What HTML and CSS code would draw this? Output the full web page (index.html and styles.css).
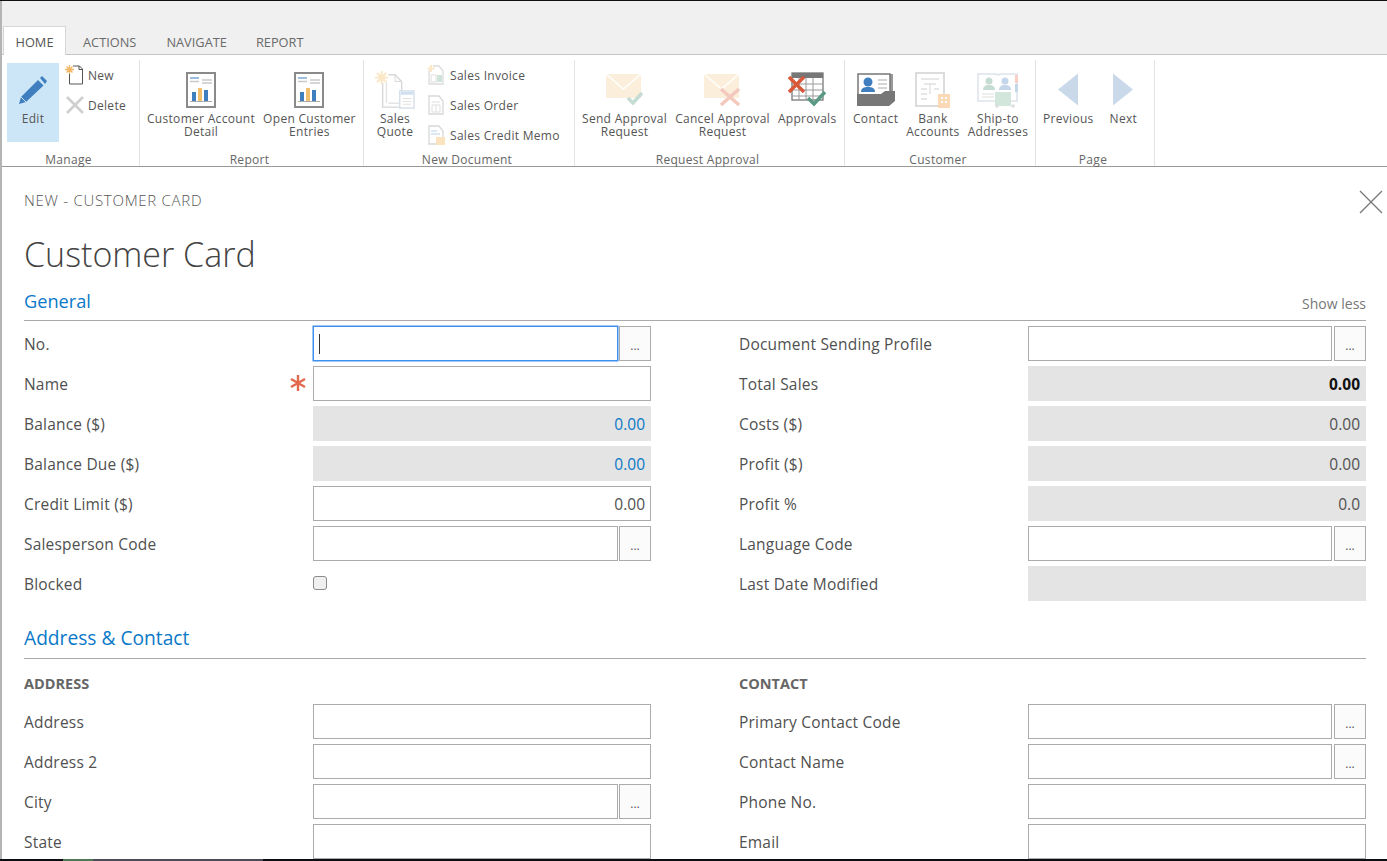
FILE: index.html
```html
<!DOCTYPE html>
<html lang="en">
<head>
<meta charset="utf-8">
<title>Customer Card</title>
<link rel="stylesheet" href="styles.css">
</head>
<body>
<div class="screen">
  <div class="top-line"></div>
  <div class="middle">
    <div class="side-bar"></div>
    <div class="app">
      <header class="chrome">
        <nav class="tabs">
          <span class="tab tab-active">HOME</span>
          <span class="tab tab-actions">ACTIONS</span>
          <span class="tab tab-navigate">NAVIGATE</span>
          <span class="tab tab-report">REPORT</span>
        </nav>
        <div class="ribbon">
          <section class="group g-manage">
            <div class="group-items">
              <div class="big big-active b-edit">
                <svg class="ico" width="34" height="34" viewBox="0 0 34 34"><path d="M22 7l5.500 5.500L10 29l-7 2 2-7z" fill="#3f7fbf"/><path d="M24 5l2-2 5 5-2 3z" fill="#3f7fbf"/><path d="M5 24l5 5" stroke="#cde6f7" stroke-width="1"/></svg>
                <span class="big-text">Edit</span>
              </div>
              <div class="small-col">
                <div class="small">
                  <svg class="ico-s" width="20" height="20" viewBox="0 0 20 20"><path d="M4.500 7v12h13V4l-3-3H8" fill="#fff" stroke="#555" stroke-width="1"/><path d="M14 1v3.500h3.500" fill="none" stroke="#555"/><path d="M4.500 0v9M0 4.500h9M1.500 1.500l6 6M7.500 1.500l-6 6" stroke="#f2b765" stroke-width="1.300"/><circle cx="4.500" cy="4.500" r="2" fill="#f2b765"/></svg>
                  <span>New</span>
                </div>
                <div class="small">
                  <svg class="ico-s" width="20" height="20" viewBox="0 0 20 20"><path d="M2 2l16 16M18 2L2 18" stroke="#cfcfcf" stroke-width="2.600"/></svg>
                  <span>Delete</span>
                </div>
              </div>
            </div>
            <div class="group-label">Manage</div>
          </section>

          <section class="group g-report">
            <div class="group-items items-gap">
              <div class="big b-cad">
                <svg class="ico" width="30" height="36" viewBox="0 0 30 36"><rect x="1" y="1" width="28" height="34" fill="#fff" stroke="#8a8a8a" stroke-width="2"/><path d="M4 6h9" stroke="#7aa7d6" stroke-width="1.500"/><path d="M4 9.500h9M16 8h10M16 11h10" stroke="#c9c9c9" stroke-width="1.300"/><rect x="6" y="20" width="4" height="9" fill="#3f7fbf"/><rect x="12" y="16" width="4" height="13" fill="#f0c06e"/><rect x="18" y="18" width="4" height="11" fill="#3f7fbf"/><path d="M4 29.500h22" stroke="#aaa"/></svg>
                <span class="big-text">Customer Account<br>Detail</span>
              </div>
              <div class="big b-oce">
                <svg class="ico" width="30" height="36" viewBox="0 0 30 36"><rect x="1" y="1" width="28" height="34" fill="#fff" stroke="#8a8a8a" stroke-width="2"/><path d="M4 6h9" stroke="#7aa7d6" stroke-width="1.500"/><path d="M4 9.500h9M16 8h10M16 11h10" stroke="#c9c9c9" stroke-width="1.300"/><rect x="6" y="20" width="4" height="9" fill="#3f7fbf"/><rect x="12" y="16" width="4" height="13" fill="#f0c06e"/><rect x="18" y="18" width="4" height="11" fill="#3f7fbf"/><path d="M4 29.500h22" stroke="#aaa"/></svg>
                <span class="big-text">Open Customer<br>Entries</span>
              </div>
            </div>
            <div class="group-label">Report</div>
          </section>

          <section class="group g-doc">
            <div class="group-items">
              <div class="big b-quote">
                <svg class="ico" width="42" height="40" viewBox="0 0 42 40"><path d="M8 12v26h20V11l-7-7H14" fill="#fff" stroke="#d8d8d8" stroke-width="1.500"/><path d="M21 4v7h7" fill="none" stroke="#d8d8d8"/><path d="M12 12v22M14 34h14" stroke="#e4e4e4" stroke-width="1.500"/><path d="M7 0v14M0 7h14M2 2l10 10M12 2L2 12" stroke="#fbe7c6" stroke-width="2"/><circle cx="7" cy="7" r="3.500" fill="#fbe7c6"/><rect x="26" y="21" width="15" height="18" fill="#fff" stroke="#d5dfe9" stroke-width="1.500"/><rect x="27" y="22" width="13" height="3" fill="#cfdff0"/><path d="M29 29h9M29 32h9M29 35h9" stroke="#dedede"/></svg>
                <span class="big-text">Sales<br>Quote</span>
              </div>
              <div class="small-col doc-col">
                <div class="small">
                  <svg class="ico-s" width="18" height="20" viewBox="0 0 18 20"><path d="M2 5v14h14V6l-4-5H6" fill="#fff" stroke="#dcdcdc" stroke-width="1.300"/><path d="M4 0v7M0.500 3.500h7" stroke="#fbe7c6" stroke-width="2"/><rect x="10" y="10" width="5" height="7" fill="#cfe3d8"/><rect x="4" y="10" width="5" height="7" fill="none" stroke="#e0e0e0"/></svg>
                  <span>Sales Invoice</span>
                </div>
                <div class="small">
                  <svg class="ico-s" width="18" height="20" viewBox="0 0 18 20"><path d="M2 1v18h14V6l-4-5z" fill="#fff" stroke="#d8d8d8" stroke-width="1.300"/><path d="M5 7h8M5 10h8v7H5zM9 10v7" fill="none" stroke="#dedede"/></svg>
                  <span>Sales Order</span>
                </div>
                <div class="small">
                  <svg class="ico-s" width="18" height="20" viewBox="0 0 18 20"><path d="M2 1v18h14V6l-4-5z" fill="#fff" stroke="#d8d8d8" stroke-width="1.300"/><path d="M4 6h6M4 9h9" stroke="#cfdff0" stroke-width="1.300"/><rect x="9" y="12" width="9" height="8" fill="#fbe3c0"/></svg>
                  <span>Sales Credit Memo</span>
                </div>
              </div>
            </div>
            <div class="group-label">New Document</div>
          </section>

          <section class="group g-approval">
            <div class="group-items items-gap">
              <div class="big b-send">
                <svg class="ico" width="40" height="36" viewBox="0 0 40 36"><path d="M1 2h35v24H1z" fill="#fbefdc"/><path d="M1 2l17.500 15L36 2" fill="none" stroke="#fff" stroke-width="1.500"/><path d="M23 26l5 5 9-10" fill="none" stroke="#c5dcd3" stroke-width="3.500"/></svg>
                <span class="big-text">Send Approval<br>Request</span>
              </div>
              <div class="big b-cancel">
                <svg class="ico" width="40" height="36" viewBox="0 0 40 36"><path d="M1 2h35v24H1z" fill="#fbefdc"/><path d="M1 2l17.500 15L36 2" fill="none" stroke="#fff" stroke-width="1.500"/><path d="M18 17l18 16M36 17L18 33" stroke="#f3c8bd" stroke-width="3.500"/></svg>
                <span class="big-text">Cancel Approval<br>Request</span>
              </div>
              <div class="big b-approvals">
                <svg class="ico" width="40" height="36" viewBox="0 0 40 36"><rect x="5" y="1" width="31" height="27" fill="#fff" stroke="#777" stroke-width="1.300"/><rect x="5" y="1" width="31" height="5" fill="#777"/><path d="M5 12h31M5 18h31M5 24h31M12 6v22M19 6v22M26 6v22" stroke="#999"/><path d="M2 5l15 15M17 5L2 20" stroke="#d9583a" stroke-width="3.500"/><path d="M21 26l6 6 11-12" fill="none" stroke="#5a9a84" stroke-width="3.500"/></svg>
                <span class="big-text">Approvals</span>
              </div>
            </div>
            <div class="group-label">Request Approval</div>
          </section>

          <section class="group g-customer">
            <div class="group-items items-gap">
              <div class="big b-contact">
                <svg class="ico" width="38" height="34" viewBox="0 0 38 34"><path d="M33 1h3v24h-3z" fill="#999"/><rect x="1" y="1" width="32" height="21" fill="#fff" stroke="#777" stroke-width="1.500"/><circle cx="11" cy="9" r="4.500" fill="#3f7fbf"/><path d="M4 19c0-4 3-5 7-5s7 1 7 5z" fill="#3f7fbf"/><path d="M21 7h9M21 11h9M21 15h9" stroke="#aaa"/><path d="M0 21h24l4-3h10v10l-6 5H0z" fill="#777"/></svg>
                <span class="big-text">Contact</span>
              </div>
              <div class="big b-bank">
                <svg class="ico" width="38" height="36" viewBox="0 0 38 36"><rect x="2" y="1" width="28" height="33" fill="#fff" stroke="#dcdcdc" stroke-width="2"/><path d="M7 7h18M10 12h12M16 12v10M7 17h6M7 22h6M7 27h6M20 17h5" stroke="#e0e0e0" stroke-width="1.300"/><path d="M24 22h12v14H24z" fill="#fad9b4"/><path d="M27 26h2M31 26h2M27 30h2M31 30h2" stroke="#fff" stroke-width="2"/></svg>
                <span class="big-text">Bank<br>Accounts</span>
              </div>
              <div class="big b-ship">
                <svg class="ico" width="42" height="36" viewBox="0 0 42 36"><path d="M1 2h18l2 1 2-1h17v27H1z" fill="#fff" stroke="#dce3ea" stroke-width="1.500"/><circle cx="12" cy="9" r="3.500" fill="#c5dcd3"/><path d="M6 18c0-4 3-5 6-5s6 1 6 5z" fill="#c5dcd3"/><circle cx="28" cy="9" r="3.500" fill="#c3d6ea"/><path d="M22 18c0-4 3-5 6-5s6 1 6 5z" fill="#c3d6ea"/><path d="M5 22h12M5 25h12" stroke="#dedede"/><rect x="18" y="20" width="16" height="14" fill="#d3e6dc"/><rect x="38" y="3" width="3" height="8" fill="#f7cfc4"/><rect x="38" y="12" width="3" height="8" fill="#c3d6ea"/><circle cx="20" cy="34" r="1.800" fill="#ddd"/><circle cx="36" cy="34" r="1.800" fill="#ddd"/></svg>
                <span class="big-text">Ship-to<br>Addresses</span>
              </div>
            </div>
            <div class="group-label">Customer</div>
          </section>

          <section class="group g-page">
            <div class="group-items items-gap-page">
              <div class="big b-prev">
                <svg class="ico" width="22" height="33" viewBox="0 0 22 33"><path d="M21 0v32L1 16z" fill="#c9d9ea"/></svg>
                <span class="big-text">Previous</span>
              </div>
              <div class="big b-next">
                <svg class="ico" width="22" height="33" viewBox="0 0 22 33"><path d="M1 0v32l20-16z" fill="#c9d9ea"/></svg>
                <span class="big-text">Next</span>
              </div>
            </div>
            <div class="group-label">Page</div>
          </section>
        </div>
      </header>

      <main class="card">
        <div class="crumb-row">
          <span class="crumb">NEW - CUSTOMER CARD</span>
          <svg class="close" width="24" height="24" viewBox="0 0 24 24"><path d="M1 1l22 22M23 1L1 23" stroke="#777" stroke-width="1.300"/></svg>
        </div>
        <h1 class="title">Customer Card</h1>

        <div class="section-head">
          <h2 class="section-title">General</h2>
          <span class="show-less">Show less</span>
        </div>
        <div class="form-grid">
          <div class="col">
            <div class="row"><label class="lbl">No.</label><div class="with-btn"><div class="field field-focus"><span class="caret"></span></div><div class="dots">...</div></div></div>
            <div class="row"><label class="lbl">Name<svg class="req" width="16" height="16" viewBox="0 0 16 16"><path d="M8 0v16M1 4l14 8M15 4L1 12" stroke="#e2694b" stroke-width="2.400"/></svg></label><div class="field"></div></div>
            <div class="row"><label class="lbl">Balance ($)</label><div class="field ro link">0.00</div></div>
            <div class="row"><label class="lbl">Balance Due ($)</label><div class="field ro link">0.00</div></div>
            <div class="row"><label class="lbl">Credit Limit ($)</label><div class="field num">0.00</div></div>
            <div class="row"><label class="lbl">Salesperson Code</label><div class="with-btn"><div class="field"></div><div class="dots">...</div></div></div>
            <div class="row"><label class="lbl">Blocked</label><div class="check-cell"><span class="check"></span></div></div>
          </div>
          <div class="col col-right">
            <div class="row"><label class="lbl">Document Sending Profile</label><div class="with-btn"><div class="field"></div><div class="dots">...</div></div></div>
            <div class="row"><label class="lbl">Total Sales</label><div class="field ro strong">0.00</div></div>
            <div class="row"><label class="lbl">Costs ($)</label><div class="field ro">0.00</div></div>
            <div class="row"><label class="lbl">Profit ($)</label><div class="field ro">0.00</div></div>
            <div class="row"><label class="lbl">Profit %</label><div class="field ro">0.0</div></div>
            <div class="row"><label class="lbl">Language Code</label><div class="with-btn"><div class="field"></div><div class="dots">...</div></div></div>
            <div class="row"><label class="lbl">Last Date Modified</label><div class="field ro"></div></div>
          </div>
        </div>

        <div class="section-head section-second">
          <h2 class="section-title">Address &amp; Contact</h2>
        </div>
        <div class="form-grid">
          <div class="col">
            <h3 class="sub">ADDRESS</h3>
            <div class="row"><label class="lbl">Address</label><div class="field"></div></div>
            <div class="row"><label class="lbl">Address 2</label><div class="field"></div></div>
            <div class="row"><label class="lbl">City</label><div class="with-btn"><div class="field"></div><div class="dots">...</div></div></div>
            <div class="row"><label class="lbl">State</label><div class="field"></div></div>
          </div>
          <div class="col col-right">
            <h3 class="sub">CONTACT</h3>
            <div class="row"><label class="lbl">Primary Contact Code</label><div class="with-btn"><div class="field"></div><div class="dots">...</div></div></div>
            <div class="row"><label class="lbl">Contact Name</label><div class="with-btn"><div class="field"></div><div class="dots">...</div></div></div>
            <div class="row"><label class="lbl">Phone No.</label><div class="field"></div></div>
            <div class="row"><label class="lbl">Email</label><div class="field"></div></div>
          </div>
        </div>
      </main>
    </div>
  </div>
  <footer class="task-strip">
    <span class="strip-a"></span><span class="strip-b"></span><span class="strip-c"></span>
  </footer>
</div>
</body>
</html>
```

FILE: styles.css
```css
* { box-sizing: border-box; }
html, body { margin: 0; height: 100%; overflow: hidden; }
body {
  font-family: "Open Sans", "Noto Sans", "Liberation Sans", sans-serif;
  color: #505050;
  background: #fff;
}
.screen { width: 1387px; height: 861px; display: flex; flex-direction: column; overflow: hidden; }
.top-line { height: 1px; background: #111; flex: none; }
.middle { flex: 1; display: flex; min-height: 0; }
.side-bar { width: 2px; background: #b4b4b4; flex: none; }
.app { flex: 1; min-width: 0; display: flex; flex-direction: column; }
.task-strip { height: 2px; flex: none; background: #0b0d12; display: flex; }
.strip-a { width: 63px; }
.strip-b { width: 30px; background: #4c7a55; }
.strip-c { width: 170px; background: #4a4d57; }

.chrome { flex: none; background: #f0f0f0; }
.tabs { height: 54px; display: flex; align-items: flex-end; padding-left: 1px; border-bottom: 1px solid #c6c6c6; }
.tab { font-size: 12.8px; line-height: 31px; height: 27px; color: #6a6a6a; }
.tab-active { width: 63px; height: 29px; line-height: 31px; margin-bottom: -1px; text-align: center; background: #fff; border: 1px solid #d6d6d6; border-bottom: 0; color: #555; }
.tab-actions { margin-left: 17px; }
.tab-navigate { margin-left: 30px; }
.tab-report { margin-left: 29px; }

.ribbon { height: 112px; background: #fff; border-bottom: 1px solid #999; display: flex; padding-top: 5px; letter-spacing: .3px; }
.group { display: flex; flex-direction: column; border-right: 1px solid #e3e3e3; flex: none; }
.g-manage { width: 138px; }
.g-report { width: 224px; }
.g-doc { width: 211px; }
.g-approval { width: 270px; }
.g-customer { width: 191px; }
.g-page { width: 119px; }
.group-items { flex: 1; min-height: 0; display: flex; padding: 3px 7px 0; }
.g-manage .group-items { padding-left: 5px; }
.g-customer .group-items { padding-left: 8px; }
.items-gap { gap: 8px; }
.items-gap-page { gap: 16px; }
.group-label { height: 14px; flex: none; font-size: 12px; line-height: 16px; text-align: center; color: #666; padding-right: 4px; }

.big { display: flex; flex-direction: column; align-items: center; flex: none; height: 79px; }
.ico { height: 46px; flex: none; padding-top: 8px; overflow: visible; display: block; }
.big-text { font-size: 12px; line-height: 13px; text-align: center; color: #555; white-space: nowrap; margin-top: 3px; }
.big-active { width: 52px; background: #cde6f7; }
.b-quote { width: 42px; margin-left: 3px; }
.small-col { display: flex; flex-direction: column; margin: -3px 0 0 6px; }
.doc-col { margin-left: 11px; }
.small { height: 30px; display: flex; align-items: center; gap: 3px; font-size: 12px; color: #555; white-space: nowrap; }
.doc-col .small { gap: 5px; }
.ico-s { flex: none; display: block; }

.card { flex: 1; min-height: 0; padding: 0 21px 0 22px; overflow: hidden; }
.crumb-row { height: 68px; display: flex; justify-content: space-between; padding-top: 23px; }
.crumb { font-size: 15px; line-height: 20px; font-weight: 300; letter-spacing: .72px; color: #555; }
.close { margin-right: -17px; }
.title { margin: 0; height: 40px; font-size: 34px; line-height: 38px; font-weight: 300; color: #444; }
.section-head { margin-top: 6px; height: 40px; display: flex; justify-content: space-between; align-items: center; border-bottom: 1px solid #aaa; }
.section-title { margin: 0; font-size: 18.2px; font-weight: 400; color: #0a78c8; }
.section-second .section-title { font-size: 19.2px; }
.show-less { font-size: 14px; color: #777; padding-top: 6px; }
.section-second { margin-top: 13px; padding-bottom: 3px; }
.form-grid { display: grid; grid-template-columns: 627px 627px; column-gap: 88px; padding-top: 5px; }
.row { display: grid; grid-template-columns: 289px 338px; height: 35px; margin-bottom: 5px; }
.lbl { font-size: 15.5px; line-height: 36px; letter-spacing: .2px; color: #505050; position: relative; white-space: nowrap; }
.req { position: absolute; left: 266px; top: 9px; }
.field { height: 35px; border: 1px solid #ababab; background: #fff; padding: 0 5px; font-size: 15.5px; line-height: 34px; text-align: right; color: #505050; flex: 1; min-width: 0; }
.field-focus { border: 1px solid #3f8fef; box-shadow: 0 0 0 .5px #3f8fef; display: flex; align-items: center; padding: 0 5px; }
.caret { width: 1px; height: 20px; background: #333; }
.ro { background: #e4e4e4; border-color: #e4e4e4; }
.link { color: #0a78c8; }
.strong { font-weight: 700; color: #111; }
.with-btn { display: flex; gap: 1px; }
.dots { width: 32px; height: 35px; flex: none; border: 1px solid #ababab; background: #fbfbfb; text-align: center; font-size: 12px; line-height: 38px; color: #555; }
.col-right .with-btn { gap: 2px; }
.check-cell { display: flex; align-items: center; height: 35px; padding-bottom: 1px; }
.check { width: 14px; height: 14px; background: #f0f0f0; border: 1px solid #8a8a8a; border-radius: 3px; }
.sub { margin: 0; height: 40px; padding-top: 10px; font-size: 14.5px; line-height: 20px; font-weight: 700; color: #666; }
```
